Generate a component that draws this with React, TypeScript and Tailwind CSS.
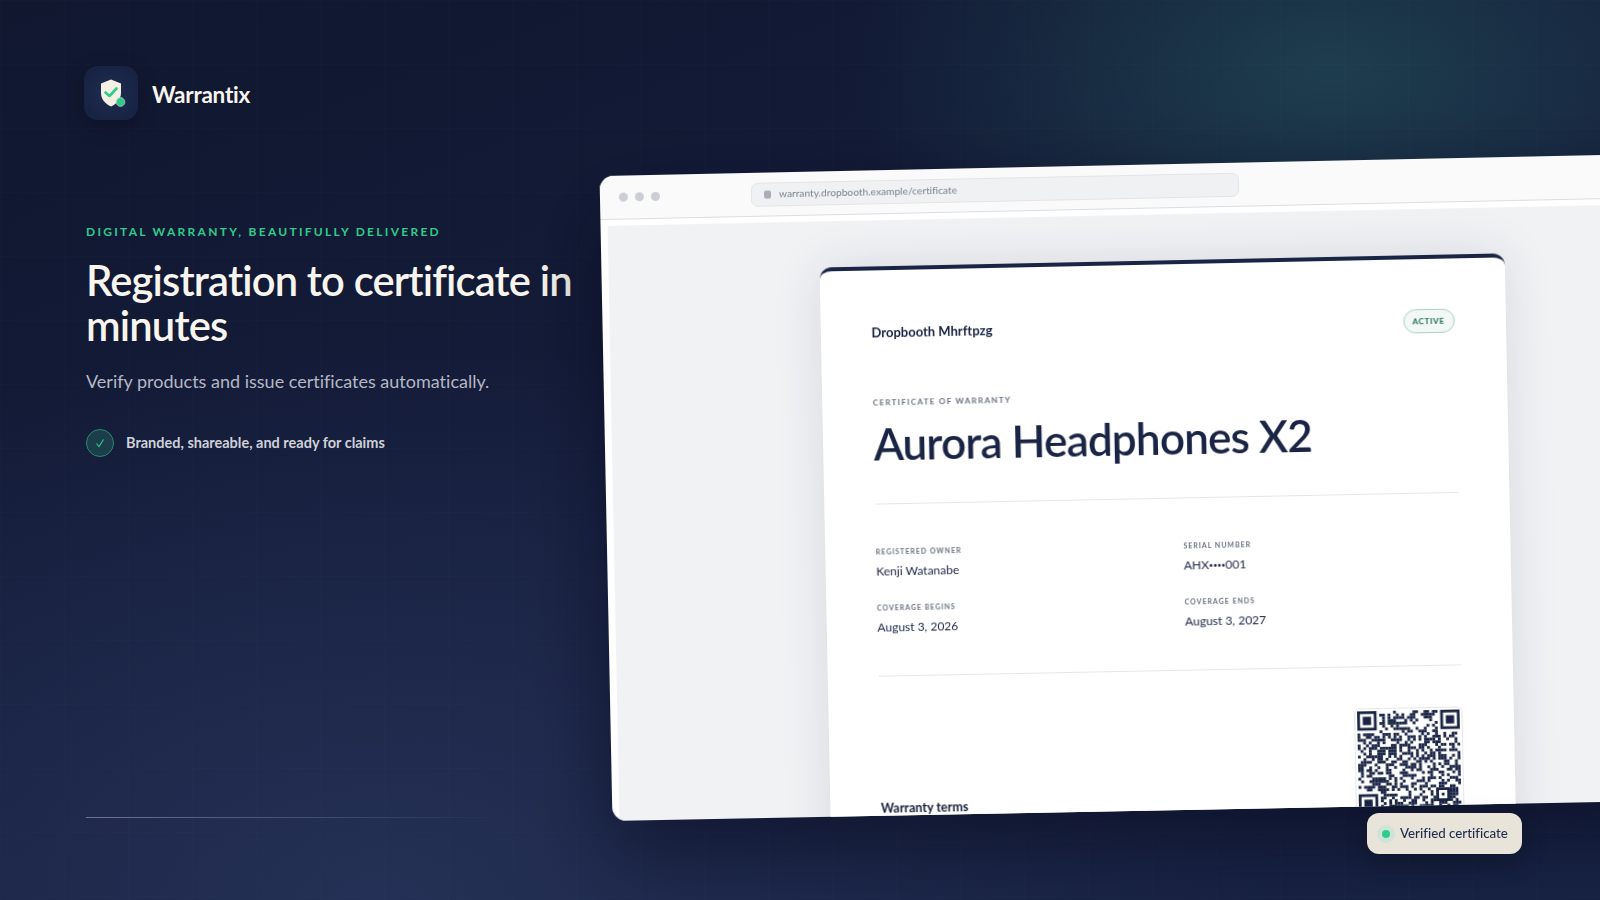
import React from "react";

const N = 37;
function qrCells() {
  let s = 20817;
  const rnd = () => {
    s = (s * 1664525 + 1013904223) >>> 0;
    return (s >>> 16) / 65536;
  };
  const cells: [number, number][] = [];
  const skip = (x: number, y: number) =>
    (x < 8 && y < 8) ||
    (x >= N - 8 && y < 8) ||
    (x < 8 && y >= N - 8) ||
    (x >= N - 9 && x < N - 4 && y >= N - 9 && y < N - 4);
  for (let y = 0; y < N; y++) {
    for (let x = 0; x < N; x++) {
      if (skip(x, y)) continue;
      if (rnd() > 0.5) cells.push([x, y]);
    }
  }
  return cells;
}

function Finder({ x, y }: { x: number; y: number }) {
  return (
    <g>
      <path d={`M${x} ${y}h7v7h-7zM${x + 1} ${y + 1}v5h5v-5z`} fill="#1a2444" fillRule="evenodd" />
      <rect x={x + 2} y={y + 2} width={3} height={3} fill="#1a2444" />
    </g>
  );
}

function QR() {
  const cells = qrCells();
  return (
    <svg viewBox={`0 0 ${N} ${N}`} className="block w-full h-full">
      <Finder x={0} y={0} />
      <Finder x={N - 7} y={0} />
      <Finder x={0} y={N - 7} />
      <path
        d={`M${N - 9} ${N - 9}h5v5h-5zM${N - 8} ${N - 8}v3h3v-3z`}
        fill="#1a2444"
        fillRule="evenodd"
      />
      <rect x={N - 7} y={N - 7} width={1} height={1} fill="#1a2444" />
      {cells.map(([x, y]) => (
        <rect key={`${x}-${y}`} x={x} y={y} width={1.02} height={1.02} fill="#1a2444" />
      ))}
    </svg>
  );
}

function Field({ label, value }: { label: string; value: React.ReactNode }) {
  return (
    <div>
      <div className="text-[7px] leading-[10px] font-bold tracking-[0.14em] uppercase text-[#6b7280]">
        {label}
      </div>
      <div className="mt-[7px] text-[12px] leading-[16px] text-[#1a2444]">{value}</div>
    </div>
  );
}

export default function App() {
  return (
    <div className="relative flex w-[1600px] h-[900px] overflow-hidden font-['Lato',sans-serif] [font-variant-ligatures:none] bg-[radial-gradient(ellipse_480px_280px_at_1330px_70px,rgba(38,90,96,0.55),rgba(38,90,96,0)_100%),radial-gradient(ellipse_900px_560px_at_380px_900px,#243055,rgba(36,48,85,0)_100%),linear-gradient(160deg,#10172f_0%,#141c3a_45%,#172244_100%)]">
      <div className="absolute inset-0 bg-[linear-gradient(rgba(255,255,255,0.008)_1px,transparent_1px),linear-gradient(90deg,rgba(255,255,255,0.008)_1px,transparent_1px)] bg-[size:64px_64px]" />

      <div className="relative flex flex-col w-[606px] shrink-0 pl-[86px] pt-[66px] pb-[82px]">
        <div className="-ml-[2px] flex items-center gap-[14px]">
          <div className="flex items-center justify-center w-[54px] h-[54px] rounded-[14px] bg-[radial-gradient(circle,#1f2d52,#16203f)] shadow-[0_6px_20px_rgba(0,0,0,0.25)]">
            <svg width="30" height="32" viewBox="0 0 30 32">
              <path d="M15 2.5 L25 6.5 V16 C25 22.5 20.5 27 15 29.5 C9.5 27 5 22.5 5 16 V6.5 Z" fill="#f4f0e4" />
              <path
                d="M9.5 15.5 L13.5 19 L20.5 11.5"
                fill="none"
                stroke="#2ecc8a"
                strokeWidth="2.6"
                strokeLinecap="round"
                strokeLinejoin="round"
              />
              <circle cx="24.5" cy="25" r="4.4" fill="#2ecc8a" stroke="#d8d8cf" strokeWidth="0.6" />
            </svg>
          </div>
          <span className="mt-[4px] text-[22.5px] leading-[32px] font-bold text-[#f8f5ee] tracking-[-0.01em]">
            Warrantix
          </span>
        </div>

        <div className="mt-[104px] text-[12px] leading-[16px] font-bold tracking-[0.19em] uppercase text-[#2ecc8a]">
          Digital warranty, beautifully delivered
        </div>
        <h1 className="mt-[18px] text-[41.7px] leading-[45px] font-semibold tracking-[-0.02em] text-[#f8f5ee] w-[500px]">
          Registration to certificate in minutes
        </h1>
        <p className="mt-[19px] text-[18px] leading-[28px] text-[#b4b7c4]">
          Verify products and issue certificates automatically.
        </p>
        <div className="mt-[34px] flex items-center gap-[12px]">
          <div className="flex items-center justify-center w-[28px] h-[28px] rounded-full border border-[#2a8a70] bg-[#1c3d4a]">
            <svg width="12" height="12" viewBox="0 0 12 12">
              <path d="M2.5 6.5 L5 9.5 L9.5 2.5" fill="none" stroke="#2ecc8a" strokeWidth="1.1" />
            </svg>
          </div>
          <span className="text-[14.5px] leading-[20px] font-bold text-[#cfd1d8]">
            Branded, shareable, and ready for claims
          </span>
        </div>
        <div className="mt-auto h-px w-[416px] bg-gradient-to-r from-[#6d7390] to-transparent" />
      </div>

      <div className="relative flex-1 pt-[176px]">
        <div className="w-[1118px] h-[645px] flex flex-col rounded-[14px] overflow-hidden bg-white shadow-[0_30px_80px_rgba(5,8,25,0.55)] origin-left [transform:perspective(2400px)_rotateY(-0.4deg)_rotate(-1.15deg)]">
          <div className="shrink-0 h-[44px] flex items-center bg-[#fafafa] border-b border-[#dcdde3] px-[19px]">
            <div className="flex gap-[7px]">
              <span className="w-[9px] h-[9px] rounded-full bg-[#cbced4]" />
              <span className="w-[9px] h-[9px] rounded-full bg-[#cbced4]" />
              <span className="w-[9px] h-[9px] rounded-full bg-[#cbced4]" />
            </div>
            <div className="ml-[91px] w-[487px] h-[24px] flex items-center gap-[8px] rounded-[7px] border border-[#e3e4e8] bg-[#f0f1f3] px-[12px]">
              <span className="w-[7px] h-[8px] rounded-[2px] bg-[#a9adb5]" />
              <span className="text-[10.2px] text-[#7c818c]">warranty.dropbooth.example/certificate</span>
            </div>
          </div>
          <div className="flex-1 min-h-0 flex justify-center overflow-hidden mx-[7px] mt-[6px] bg-[#f1f2f4]">
            <div className="w-[683px] h-[900px] mt-[46px] shrink-0 rounded-t-[12px] border-t-[4px] border-[#1a2444] bg-white shadow-[0_0_50px_rgba(40,45,70,0.12)] px-[51px] pt-[50px]">
              <div className="flex items-start justify-between">
                <div className="mt-[3px] text-[13px] leading-[18px] font-bold text-[#1a2444]">Dropbooth Mhrftpzg</div>
                <div className="flex items-center justify-center w-[51px] h-[24px] rounded-full border border-[#a9d3c0] bg-[#f2f8f5] text-[8px] font-bold tracking-[0.08em] text-[#1c6b55]">
                  ACTIVE
                </div>
              </div>
              <div className="mt-[52px] text-[8px] leading-[12px] font-bold tracking-[0.16em] uppercase text-[#6b7280]">
                Certificate of warranty
              </div>
              <div className="mt-[5px] text-[44px] leading-[60px] font-semibold tracking-[-0.02em] text-[#1a2444]">
                Aurora Headphones X2
              </div>
              <div className="mt-[30px] h-px bg-[#e5e7ec]" />
              <div className="mt-[42px] grid grid-cols-[307px_1fr] gap-y-[23px]">
                <Field label="Registered owner" value="Kenji Watanabe" />
                <Field
                  label="Serial number"
                  value={
                    <>
                      AHX<span className="text-[7px] align-[1px]">••••</span>001
                    </>
                  }
                />
                <Field label="Coverage begins" value="August 3, 2026" />
                <Field label="Coverage ends" value="August 3, 2027" />
              </div>
              <div className="mt-[40px] h-px bg-[#e5e7ec]" />
              <div className="mt-[41px] flex items-start justify-between">
                <div className="mt-[83px] text-[12.5px] leading-[16px] font-bold text-[#141c36]">Warranty terms</div>
                <div className="w-[108px] h-[108px] p-[2px] rounded-[6px] border border-[#e5e7ec]">
                  <QR />
                </div>
              </div>
            </div>
          </div>
        </div>
        <div className="absolute left-[761px] top-[813px] flex items-center gap-[5px] h-[41px] pl-[10px] pr-[14px] rounded-[12px] bg-[#e8e4da] shadow-[0_8px_24px_rgba(0,0,0,0.25)]">
          <span className="flex items-center justify-center w-[18px] h-[18px] rounded-full bg-[#cfe3d6]">
            <span className="w-[8px] h-[8px] rounded-full bg-[#2ecc8a]" />
          </span>
          <span className="mt-[1px] text-[13.3px] font-medium text-[#1f2b4d]">Verified certificate</span>
        </div>
      </div>
    </div>
  );
}
